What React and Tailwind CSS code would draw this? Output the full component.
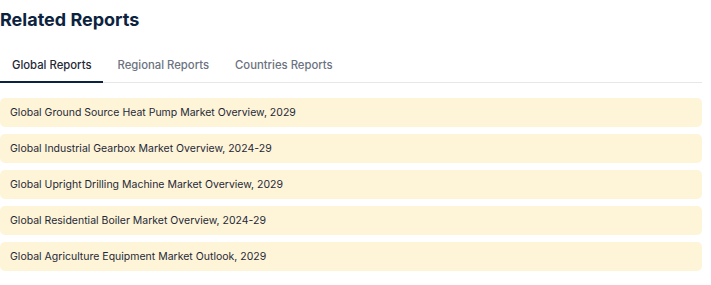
import React, { useState } from "react";

const tabs = ["Global Reports", "Regional Reports", "Countries Reports"];

const reports = [
  "Global Ground Source Heat Pump Market Overview, 2029",
  "Global Industrial Gearbox Market Overview, 2024-29",
  "Global Upright Drilling Machine Market Overview, 2029",
  "Global Residential Boiler Market Overview, 2024-29",
  "Global Agriculture Equipment Market Outlook, 2029",
];

const App = () => {
  const [active, setActive] = useState(0);

  return (
    <div className="w-[711px] h-[285px] bg-white font-['Inter',sans-serif] pr-[9px] overflow-hidden">
      <h2 className="text-lg leading-7 pt-[6px] font-bold text-[#0c2340]">
        Related Reports
      </h2>

      <div className="mt-[19px] flex gap-[2px] border-b border-[#e5e7eb]">
        {tabs.map((tab, i) => (
          <button
            key={tab}
            type="button"
            onClick={() => setActive(i)}
            className={
              i === active
                ? "px-3 pt-[5px] pb-[9px] -mb-px text-[11.3px] leading-[14px] font-medium text-[#1f2937] border-b-2 border-[#0c2340] cursor-pointer"
                : "px-3 pt-[5px] pb-[9px] -mb-px text-[11.3px] leading-[14px] font-medium text-[#6b7280] border-b-2 border-transparent cursor-pointer"
            }
          >
            {tab}
          </button>
        ))}
      </div>

      <ul className="mt-[15px] flex flex-col gap-[7px]">
        {reports.map((r) => (
          <li
            key={r}
            className="h-[29px] flex items-center px-[10px] rounded-[5px] bg-[#fef4d8] text-[10.5px] text-[#1f2937]"
          >
            {r}
          </li>
        ))}
      </ul>
    </div>
  );
};

export default App;
